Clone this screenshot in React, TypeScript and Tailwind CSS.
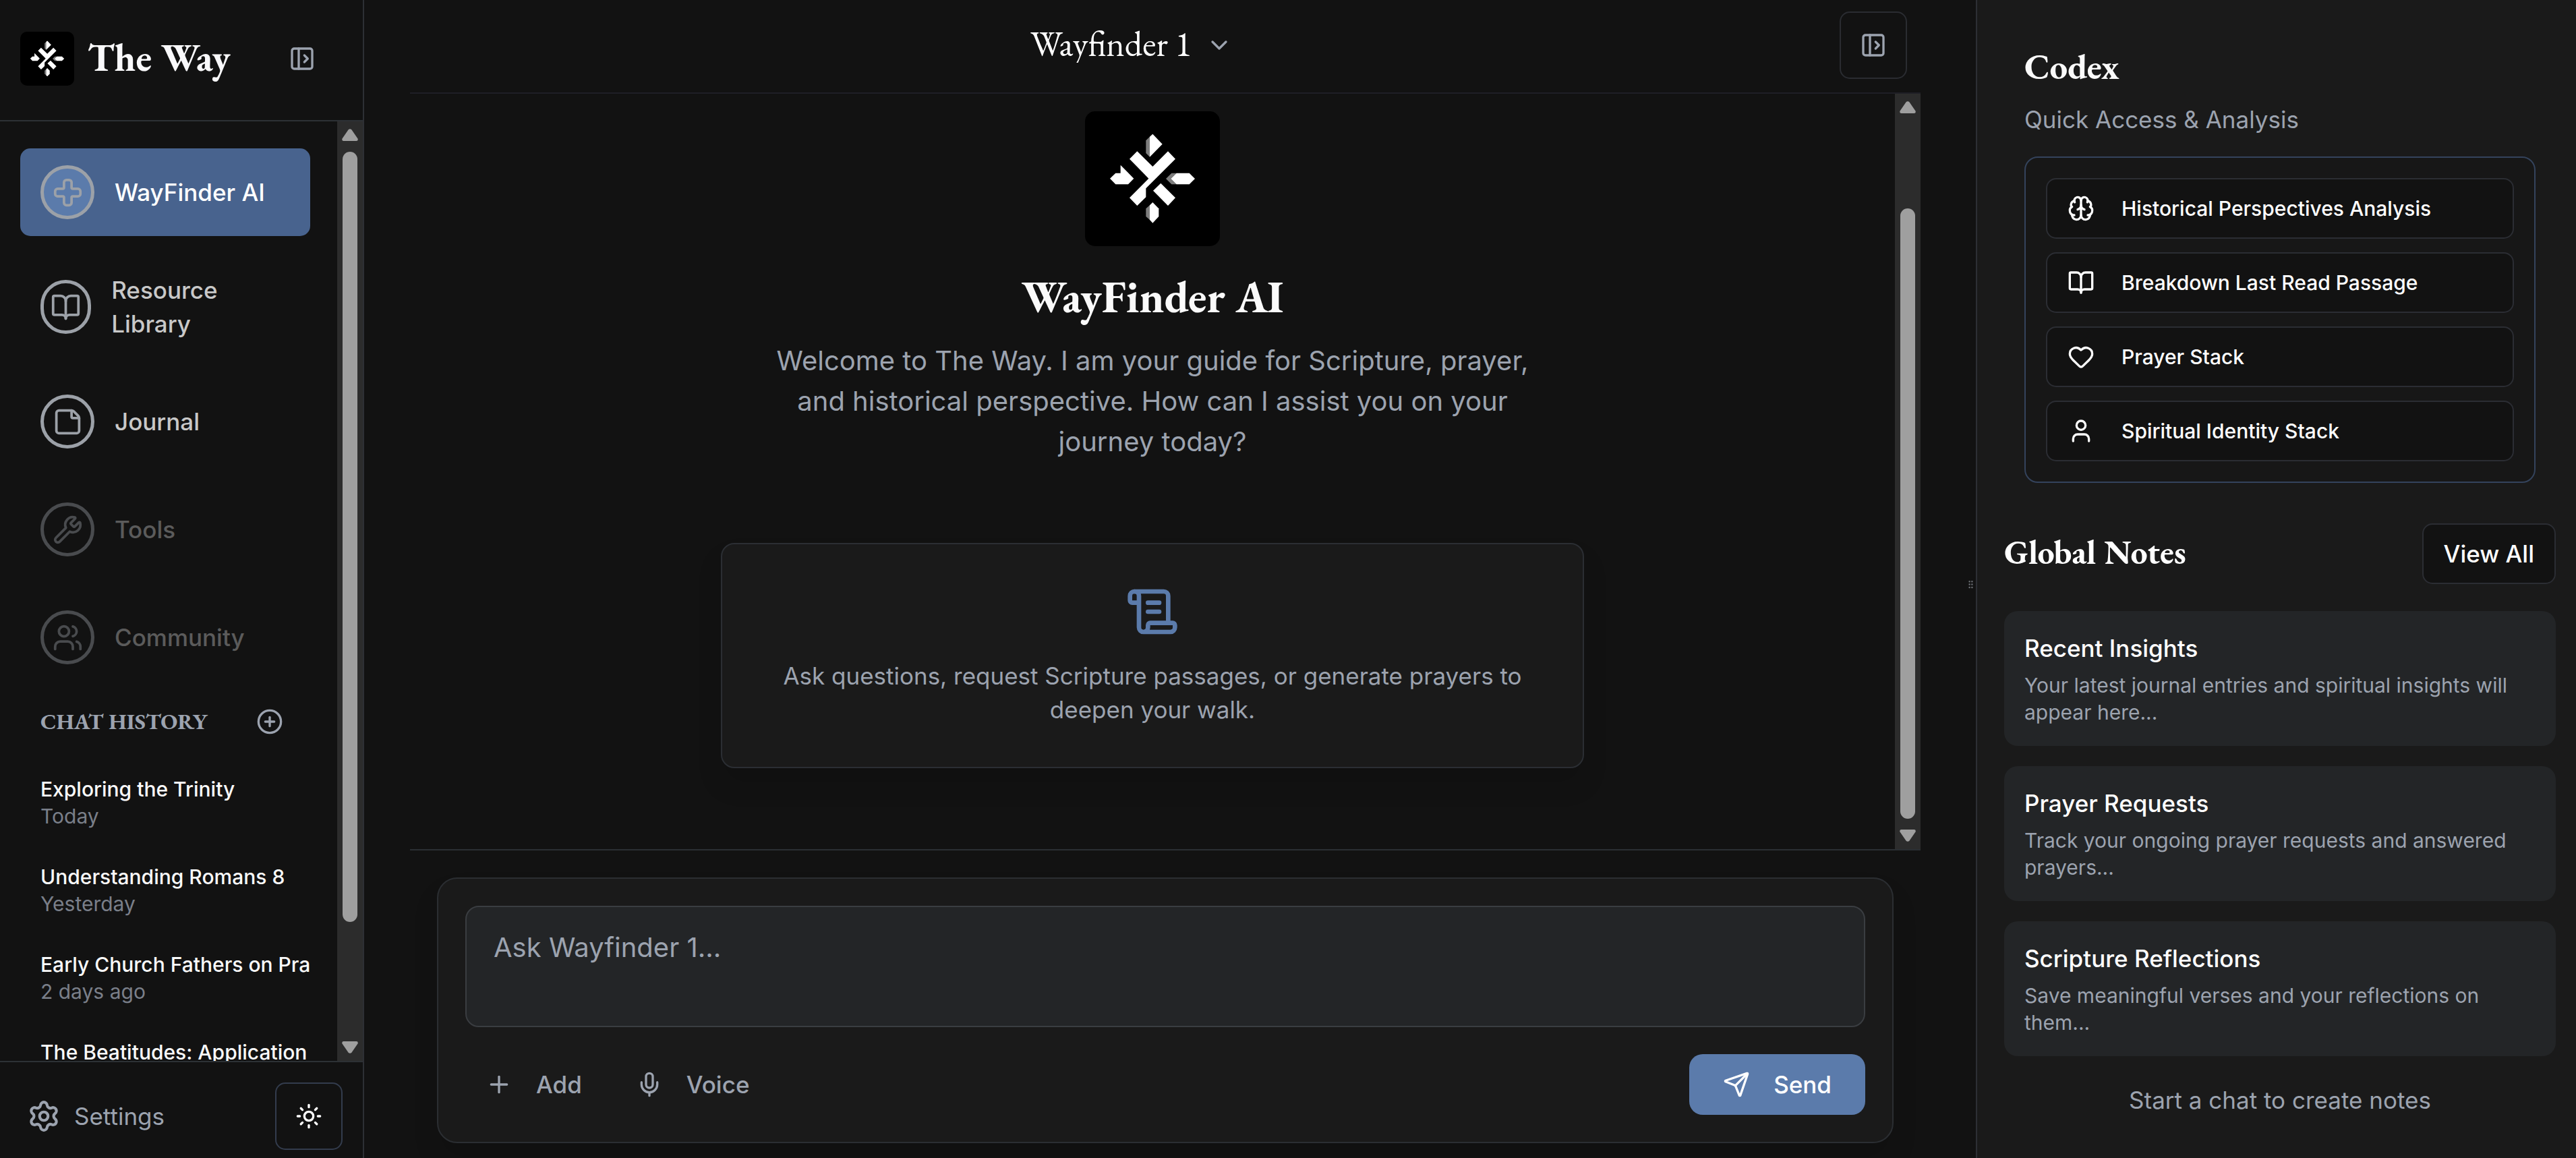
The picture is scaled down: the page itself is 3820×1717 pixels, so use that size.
import React from "react";
import {
  BookOpen,
  Brain,
  ChevronDown,
  CirclePlus,
  Cross,
  GripVertical,
  Heart,
  Mic,
  PanelLeftOpen,
  Plus,
  ScrollText,
  Send,
  Settings,
  StickyNote,
  Sun,
  User,
  Users,
  Wrench,
  type LucideIcon,
} from "lucide-react";

const serif = "font-['EB_Garamond','Liberation_Serif',serif]";

function Logo({ className }: { className: string }) {
  return (
    <svg viewBox="-90 -60 600 600" className={className} role="img" aria-label="The Way logo">
      <g fill="#7d7d7d">
        <path d="M181 70 198 53V143L181 126Z" />
        <path d="M270 240 295 215H317L292 240 317 265H295Z" />
        <path d="M181 373 198 358V423L181 408Z" />
      </g>
      <g fill="#fff">
        <path d="M198 53 211 41 254 86 198 143Z" />
        <path d="M142 118 211 186 279 118 312 152 181 283V322L142 360 108 325 193 239 108 152Z" />
        <path d="M247 260 312 325 279 360 213 293Z" />
        <path d="M21 239 46 215H68V179L127 239 102 265H46Z" />
        <path d="M292 240 317 215H374L399 240 374 265H317Z" />
        <path d="M198 358 211 345 238 373V408L211 437 198 423Z" />
      </g>
    </svg>
  );
}

function ScrollBar({ before, thumb, after }: { before: number; thumb: number; after: number }) {
  return (
    <div aria-hidden="true" className="flex w-[38px] shrink-0 flex-col items-center bg-[#2c2c2c] py-[11px]">
      <svg viewBox="0 0 24 18" className="h-[18px] w-6 shrink-0 fill-[#9f9f9f]">
        <path d="M9.500 1.500Q12-1 14.500 1.500L23.500 14.500Q24.500 18 21.500 18H2.500Q-.5 18 .5 14.500Z" />
      </svg>
      <div className="flex w-[22px] flex-1 flex-col py-4">
        <div className="basis-0" style={{ flexGrow: before }} />
        <div className="basis-0 rounded-full bg-[#9f9f9f]" style={{ flexGrow: thumb }} />
        <div className="basis-0" style={{ flexGrow: after }} />
      </div>
      <svg viewBox="0 0 24 18" className="h-[18px] w-6 shrink-0 rotate-180 fill-[#9f9f9f]">
        <path d="M9.500 1.500Q12-1 14.500 1.500L23.500 14.500Q24.500 18 21.500 18H2.500Q-.5 18 .5 14.500Z" />
      </svg>
    </div>
  );
}

type NavItem = { label: string; icon: LucideIcon; active?: boolean; disabled?: boolean };

const navItems: NavItem[] = [
  { label: "WayFinder AI", icon: Cross, active: true },
  { label: "Resource Library", icon: BookOpen },
  { label: "Journal", icon: StickyNote },
  { label: "Tools", icon: Wrench, disabled: true },
  { label: "Community", icon: Users, disabled: true },
];

const chats: { title: string; when?: string }[] = [
  { title: "Exploring the Trinity", when: "Today" },
  { title: "Understanding Romans 8", when: "Yesterday" },
  { title: "Early Church Fathers on Pra", when: "2 days ago" },
  { title: "The Beatitudes: Application" },
];

const codexItems: { label: string; icon: LucideIcon }[] = [
  { label: "Historical Perspectives Analysis", icon: Brain },
  { label: "Breakdown Last Read Passage", icon: BookOpen },
  { label: "Prayer Stack", icon: Heart },
  { label: "Spiritual Identity Stack", icon: User },
];

const notes = [
  { title: "Recent Insights", text: "Your latest journal entries and spiritual insights will appear here..." },
  { title: "Prayer Requests", text: "Track your ongoing prayer requests and answered prayers..." },
  { title: "Scripture Reflections", text: "Save meaningful verses and your reflections on them..." },
];

function NavButton({ label, icon: Icon, active, disabled }: NavItem) {
  return (
    <button
      type="button"
      disabled={disabled}
      aria-current={active ? "page" : undefined}
      className={`flex w-full items-center gap-[30px] rounded-[15px] px-[30px] py-[25px] text-left text-[35px] leading-[50px] font-medium ${
        active ? "bg-[#48638e] text-white" : "text-[#c8c8c8]"
      } ${disabled ? "opacity-40" : ""}`}
    >
      <span
        className={`flex h-20 w-20 shrink items-center justify-center rounded-full border-[5px] border-[#9ca1a8] text-[#9ca1a8] ${
          active ? "bg-[#5b7bab]" : ""
        }`}
      >
        <Icon className="size-[45px]" strokeWidth={2} />
      </span>
      <span>{label}</span>
    </button>
  );
}

function Sidebar() {
  return (
    <aside className="flex w-[540px] shrink-0 flex-col border-r-2 border-[#2d2f34] bg-[#121212]">
      <header className="flex h-[180px] shrink-0 items-center justify-between border-b-2 border-[#2d3135] pr-[70px] pb-1 pl-[30px]">
        <div className="flex items-center gap-5">
          <Logo className="size-20 rounded-[10px] bg-black" />
          <h1 className={`${serif} pb-1 text-[57px] leading-[60px] font-bold text-[#f9f9fb]`}>The Way</h1>
        </div>
        <button type="button" aria-label="Collapse sidebar" className="text-[#9ca3af]">
          <PanelLeftOpen className="size-10" />
        </button>
      </header>

      <div className="flex min-h-0 flex-1">
        <div className="min-w-0 flex-1 overflow-hidden pt-10 pr-10 pl-[30px]">
          <nav className="flex flex-col gap-[30px]">
            {navItems.map((item) => (
              <NavButton key={item.label} {...item} />
            ))}
          </nav>
          <section className="pl-[30px]">
            <div className="flex items-center justify-between pt-10 pr-10 pb-[35px]">
              <h2 className={`${serif} text-[33px] leading-10 font-bold text-[#9ca3af]`}>CHAT HISTORY</h2>
              <button type="button" aria-label="New chat" className="text-[#9ca3af]">
                <CirclePlus className="size-10" />
              </button>
            </div>
            <ul>
              {chats.map((chat) => (
                <li key={chat.title}>
                  <a href="#chat" className="block overflow-hidden py-[25px] text-[30px] leading-10 whitespace-nowrap">
                    <span className="block font-medium text-[#fafafa]">{chat.title}</span>
                    {chat.when && <span className="block text-[#7a7f89]">{chat.when}</span>}
                  </a>
                </li>
              ))}
            </ul>
          </section>
        </div>
        <ScrollBar before={0} thumb={1142} after={161} />
      </div>

      <footer className="flex shrink-0 items-center justify-between border-t-2 border-[#2d3135] pt-[30px] pr-[30px] pb-3 pl-10">
        <a href="#settings" className="flex items-center gap-5 text-[35px] leading-[50px] text-[#9ca3af]">
          <Settings className="size-[50px]" />
          Settings
        </a>
        <button
          type="button"
          aria-label="Toggle theme"
          className="flex size-[100px] items-center justify-center rounded-[15px] border-2 border-[#333c4d] text-white"
        >
          <Sun className="size-10" />
        </button>
      </footer>
    </aside>
  );
}

function ChatHeader() {
  return (
    <header className="flex shrink-0 items-center border-b-2 border-[#1f1f26] px-5 pt-[17px] pb-5">
      <div className="flex flex-1 justify-center">
        <div className="relative">
          <select
            aria-label="Model"
            className={`${serif} block appearance-none bg-transparent pr-[60px] pb-1 text-[52px] leading-[56px] text-white outline-none`}
          >
            <option>Wayfinder 1</option>
          </select>
          <ChevronDown className="pointer-events-none absolute top-[10px] right-0 size-10 text-[#9ca3af]" />
        </div>
      </div>
      <button
        type="button"
        aria-label="Toggle codex panel"
        className="flex size-[100px] items-center justify-center rounded-[15px] border-2 border-[#2a2c31] text-[#9ca3af]"
      >
        <PanelLeftOpen className="size-10" />
      </button>
    </header>
  );
}

function Composer() {
  return (
    <form
      onSubmit={(e) => e.preventDefault()}
      className="flex flex-col gap-10 rounded-[30px] border-2 border-[#2b2e32] bg-[#1a1a1a] p-10 shadow-[0_25px_38px_rgba(0,0,0,0.1)]"
    >
      <textarea
        aria-label="Message"
        placeholder="Ask Wayfinder 1..."
        className="block h-[180px] w-full resize-none rounded-[20px] border-2 border-[#3a3d41] bg-[#232527] px-10 py-[30px] text-[40px] leading-[60px] text-white outline-none placeholder:text-[#9ca3af]"
      />
      <div className="flex h-[90px] items-stretch gap-5 text-[35px] leading-[50px] font-medium text-[#9ca3af]">
        <button type="button" className="flex items-center gap-[35px] px-[30px]">
          <Plus className="size-10" />
          Add
        </button>
        <button type="button" className="flex items-center gap-[35px] px-[30px]">
          <Mic className="size-10" />
          Voice
        </button>
        <button type="submit" className="ml-auto flex items-center gap-[35px] rounded-[20px] bg-[#5b7bab] px-[50px] text-white">
          <Send className="size-10" />
          Send
        </button>
      </div>
    </form>
  );
}

function Chat() {
  return (
    <main className="flex min-w-0 flex-1 flex-col pr-[67px] pl-[68px]">
      <ChatHeader />
      <div className="flex min-h-0 flex-1 border-b-2 border-[#2b2f33]">
        <div className="flex min-w-0 flex-1 flex-col items-center overflow-hidden pt-[26px] text-center text-[#9ca3af]">
          <Logo className="size-[200px] shrink-0 rounded-[15px] bg-black" />
          <h2 className={`${serif} mt-[38px] text-[66px] leading-[75px] font-bold text-[#fafafa]`}>WayFinder AI</h2>
          <p className="mt-[27px] max-w-[1120px] text-[40px] leading-[60px]">
            Welcome to The Way. I am your guide for Scripture, prayer, and historical perspective. How can I assist
            you on your journey today?
          </p>
          <div className="mt-[120px] flex w-full max-w-[1280px] flex-col items-center gap-[30px] rounded-[20px] border-2 border-[#2b2e33] bg-[#1a1a1a] p-[60px] shadow-[0_25px_38px_rgba(0,0,0,0.1)]">
            <ScrollText className="size-20 text-[#5b7bab]" />
            <p className="text-[35px] leading-[50px]">
              Ask questions, request Scripture passages, or generate prayers to deepen your walk.
            </p>
          </div>
        </div>
        <ScrollBar before={125} thumb={905} after={0} />
      </div>
      <div className="shrink-0 px-10 pt-10 pb-[22px]">
        <Composer />
      </div>
    </main>
  );
}

function CodexPanel() {
  return (
    <aside className="w-[890px] shrink-0 overflow-hidden border-l-2 border-[#2d2f34] bg-[#1a1a1a] pt-[68px] pr-[30px] pl-10">
      <section className="px-[30px]">
        <h2 className={`${serif} text-[53px] leading-[62px] font-bold text-[#fafafa]`}>Codex</h2>
        <p className="mt-[22px] text-[35px] leading-[50px] text-[#9ca3af]">Quick Access &amp; Analysis</p>
        <div className="mt-[30px] flex flex-col gap-5 rounded-[20px] border-2 border-[#34435c] bg-[#171717] p-[30px]">
          {codexItems.map(({ label, icon: Icon }) => (
            <button
              key={label}
              type="button"
              className="flex h-[90px] items-center gap-10 rounded-[15px] border-2 border-[#2b2d33] bg-[#121212] px-[30px] text-[30px] leading-10 font-medium text-white"
            >
              <Icon className="size-10" />
              {label}
            </button>
          ))}
        </div>
      </section>

      <section className="mt-[60px]">
        <div className="flex items-center justify-between">
          <h2 className={`${serif} pb-1 text-[50px] leading-[60px] font-bold text-white`}>Global Notes</h2>
          <button
            type="button"
            className="h-[90px] rounded-[15px] border-2 border-[#2b2d33] bg-[#121212] px-[30px] text-[35px] leading-[50px] font-medium text-white"
          >
            View All
          </button>
        </div>
        <div className="mt-10 flex flex-col gap-[30px]">
          {notes.map((note) => (
            <article key={note.title} className="rounded-[20px] bg-[#232527] p-[30px]">
              <h3 className="text-[35px] leading-[50px] font-medium text-white">{note.title}</h3>
              <p className="mt-[10px] text-[30px] leading-10 text-[#9ca3af]">{note.text}</p>
            </article>
          ))}
        </div>
        <p className="mt-10 text-center text-[35px] leading-[50px] text-[#9ca3af]">Start a chat to create notes</p>
      </section>
    </aside>
  );
}

export default function App() {
  return (
    <div className="flex h-screen overflow-hidden bg-[#121212] font-['Inter',sans-serif]">
      <Sidebar />
      <Chat />
      <div className="flex w-[15px] shrink-0 items-center pt-4 text-[#6b6e74]">
        <GripVertical className="size-[15px]" />
      </div>
      <CodexPanel />
    </div>
  );
}
